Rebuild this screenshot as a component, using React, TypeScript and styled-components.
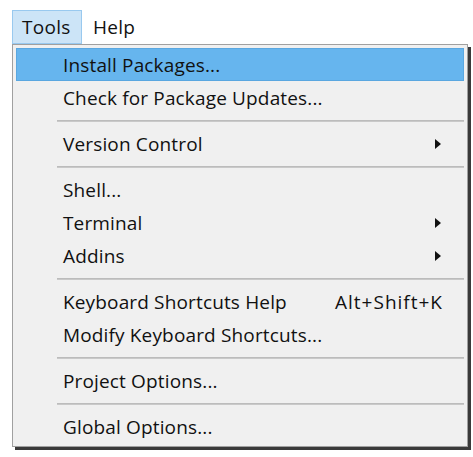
import React from "react";
import styled, { createGlobalStyle } from "styled-components";

const Global = createGlobalStyle`
  html, body { margin: 0; padding: 0; background: #ffffff; }
  body { font-family: "Open Sans", "Noto Sans", "Liberation Sans", sans-serif; }
`;

const Page = styled.div`
  width: 473px;
  height: 457px;
  padding-top: 10px;
  box-sizing: border-box;
  position: relative;
  overflow: hidden;
`;

const MenuBar = styled.div`
  display: flex;
  align-items: stretch;
  padding-left: 12px;
  height: 34px;
`;

const BarItem = styled.div<{ $open?: boolean }>`
  display: flex;
  align-items: center;
  padding: 0 ${(p) => (p.$open ? "9px" : "10px")};
  font-size: 19px;
  font-weight: 500;
  letter-spacing: 0.3px;
  color: #111111;
  box-sizing: border-box;
  border: 1px solid ${(p) => (p.$open ? "#99c9ef" : "transparent")};
  background: ${(p) => (p.$open ? "#cce4f7" : "transparent")};
  width: ${(p) => (p.$open ? "70px" : "auto")};
`;

const Dropdown = styled.div`
  margin-left: 12px;
  width: 456px;
  box-sizing: border-box;
  background: #f0f0f0;
  border: 1px solid #a0a0a0;
  padding: 3px;
  box-shadow: 3px 3px 0 #3a3a3a;
  display: flex;
  flex-direction: column;
`;

const Item = styled.div<{ $active?: boolean }>`
  display: flex;
  align-items: center;
  height: 33px;
  box-sizing: border-box;
  padding-left: 46px;
  padding-right: 18px;
  font-size: 19px;
  font-weight: 500;
  letter-spacing: 0.15px;
  color: #111111;
  background: ${(p) => (p.$active ? "#66b5ee" : "transparent")};
  border: 1px solid ${(p) => (p.$active ? "#5aa7e0" : "transparent")};
`;

const Label = styled.span`
  flex: 1;
  white-space: nowrap;
`;

const Shortcut = styled.span`
  white-space: nowrap;
  letter-spacing: 1px;
  margin-right: 2px;
`;

const Separator = styled.div`
  height: 13px;
  display: flex;
  align-items: center;
  padding-left: 41px;
  &::after {
    content: "";
    flex: 1;
    height: 2px;
    background: #c9c9c9;
    border-top: 1px solid #bcbcbc;
    box-sizing: border-box;
  }
`;

const Arrow = () => (
  <svg width="6" height="10" viewBox="0 0 6 10" style={{ marginRight: 4 }}>
    <path d="M0 0 L6 5 L0 10 Z" fill="#111" />
  </svg>
);

type Entry =
  | { kind: "sep" }
  | { kind: "item"; label: string; active?: boolean; sub?: boolean; shortcut?: string };

const entries: Entry[] = [
  { kind: "item", label: "Install Packages...", active: true },
  { kind: "item", label: "Check for Package Updates..." },
  { kind: "sep" },
  { kind: "item", label: "Version Control", sub: true },
  { kind: "sep" },
  { kind: "item", label: "Shell..." },
  { kind: "item", label: "Terminal", sub: true },
  { kind: "item", label: "Addins", sub: true },
  { kind: "sep" },
  { kind: "item", label: "Keyboard Shortcuts Help", shortcut: "Alt+Shift+K" },
  { kind: "item", label: "Modify Keyboard Shortcuts..." },
  { kind: "sep" },
  { kind: "item", label: "Project Options..." },
  { kind: "sep" },
  { kind: "item", label: "Global Options..." },
];

export default function App() {
  return (
    <Page>
      <Global />
      <MenuBar>
        <BarItem $open>Tools</BarItem>
        <BarItem>Help</BarItem>
      </MenuBar>
      <Dropdown>
        {entries.map((e, i) =>
          e.kind === "sep" ? (
            <Separator key={i} />
          ) : (
            <Item key={i} $active={e.active}>
              <Label>{e.label}</Label>
              {e.shortcut && <Shortcut>{e.shortcut}</Shortcut>}
              {e.sub && <Arrow />}
            </Item>
          )
        )}
      </Dropdown>
    </Page>
  );
}
